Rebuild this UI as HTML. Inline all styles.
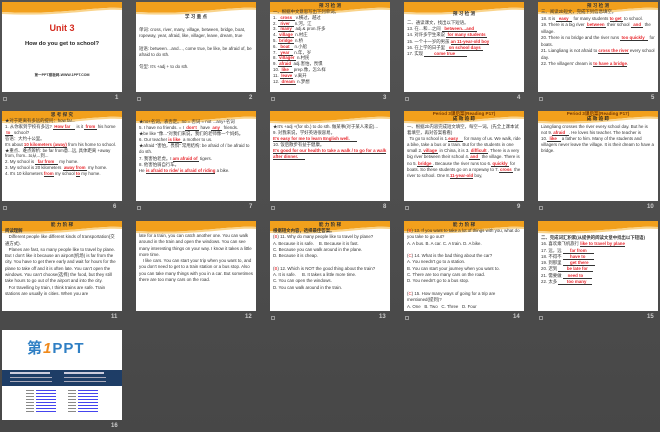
<!DOCTYPE html>
<html><head><meta charset="utf-8"><style>
*{margin:0;padding:0;box-sizing:border-box}
body{width:660px;height:432px;overflow:hidden;background:linear-gradient(#535353,#474747);font-family:"Liberation Sans","Noto Sans CJK SC",sans-serif;position:relative}
.s{position:absolute;width:120px;height:90px;background:#fff;overflow:hidden;font-size:4.4px;line-height:6.2px;color:#333}
.s svg.h{position:absolute;left:0;top:0}
.b{position:absolute;left:3px;right:3px;top:9px}
.t{text-align:center;font-weight:bold;font-size:4.6px;position:absolute;left:0;right:0;top:1px}
.r{color:#e8262c;border-bottom:.5px solid #333;font-weight:bold}
.n{position:absolute;color:#ccc;font-size:6px;font-weight:bold}
.i{position:absolute;width:4px;height:4px;border:.6px solid #999}
</style></head><body>
<div class="s" style="left:2px;top:2px">
<svg class="h" width="120" height="14"><path d="M0 0H120V6C95 4 60 13 0 10Z" fill="#f2a01c"/><path d="M0 10C60 13 95 4 120 6V8C95 6 60 15 0 12Z" fill="#f9d38a"/></svg>
<div style="position:absolute;top:23px;width:100%;text-align:center;color:#d42a1e;font-weight:bold;font-size:9px">Unit 3</div>
<div style="position:absolute;top:39px;width:100%;text-align:center;font-weight:bold;font-size:5.8px;color:#222">How do you get to school?</div>
<div style="position:absolute;top:70px;width:100%;text-align:center;font-weight:bold;font-size:3.6px">第一PPT模板网-WWW.1PPT.COM</div>
</div>
<div class="s" style="left:136px;top:2px">
<svg class="h" width="120" height="14"><path d="M0 0H120V6C95 4 60 13 0 10Z" fill="#f2a01c"/><path d="M0 10C60 13 95 4 120 6V8C95 6 60 15 0 12Z" fill="#f9d38a"/></svg>
<div class="t" style="top:12px">学 习 重 点</div>
<div class="b" style="top:25px">单词: cross, river, many, village, between, bridge, boat, ropeway, year, afraid, like, villager, leave, dream, true<br><br>短语: between…and…, come true, be like, be afraid of, be afraid to do sth.<br><br>句型: It's +adj + to do sth.</div>
</div>
<div class="s" style="left:270px;top:2px">
<svg class="h" width="120" height="14"><path d="M0 0H120V6C95 4 60 13 0 10Z" fill="#f2a01c"/><path d="M0 10C60 13 95 4 120 6V8C95 6 60 15 0 12Z" fill="#f9d38a"/></svg>
<div class="t">预 习 检 测</div>
<div class="b" style="top:7px;line-height:5.8px">一、根据中文意思写出下列单词。<br>1. <span class="r">&nbsp;&nbsp;cross&nbsp;&nbsp;</span> v.横过，越过<br>2. <span class="r">&nbsp;&nbsp;river&nbsp;&nbsp;&nbsp;</span> n.河，江<br>3. <span class="r">&nbsp;&nbsp;many&nbsp;&nbsp;</span> adj.&amp; pron.许多<br>4. <span class="r">&nbsp;village&nbsp;</span> n.村庄<br>5. <span class="r">&nbsp;bridge&nbsp;</span> n.桥<br>6. <span class="r">&nbsp;&nbsp;boat&nbsp;&nbsp;&nbsp;</span> n.小船<br>7. <span class="r">&nbsp;&nbsp;year&nbsp;&nbsp;&nbsp;</span> n.年，岁<br>8. <span class="r">&nbsp;villager&nbsp;</span> n.村民<br>9. <span class="r">&nbsp;afraid&nbsp;</span> adj.害怕，畏惧<br>10. <span class="r">&nbsp;like&nbsp;&nbsp;&nbsp;</span> prep.像，怎么样<br>11. <span class="r">&nbsp;leave&nbsp;</span> v.离开<br>12. <span class="r">&nbsp;dream&nbsp;</span> n.梦想</div>
</div>
<div class="s" style="left:404px;top:2px">
<svg class="h" width="120" height="14"><path d="M0 0H120V6C95 4 60 13 0 10Z" fill="#f2a01c"/><path d="M0 10C60 13 95 4 120 6V8C95 6 60 15 0 12Z" fill="#f9d38a"/></svg>
<div class="t" style="top:9px">预 习 检 测</div>
<div class="b" style="top:18px">二、通读课文，找出以下短语。<br>13. 在…和…之间 <span class="r">&nbsp;&nbsp;between…and&nbsp;&nbsp;</span><br>14. 对许多学生来说 <span class="r">&nbsp;for many students&nbsp;</span><br>15. 一个十一岁的男孩 <span class="r">an 11-year-old boy</span><br>16. 在上学的日子里 <span class="r">&nbsp;&nbsp;on school days&nbsp;&nbsp;</span><br>17. 实现 <span class="r">&nbsp;&nbsp;&nbsp;&nbsp;&nbsp;&nbsp;&nbsp;&nbsp;come true&nbsp;&nbsp;&nbsp;&nbsp;&nbsp;&nbsp;&nbsp;&nbsp;&nbsp;&nbsp;</span></div>
</div>
<div class="s" style="left:538px;top:2px">
<svg class="h" width="120" height="14"><path d="M0 0H120V6C95 4 60 13 0 10Z" fill="#f2a01c"/><path d="M0 10C60 13 95 4 120 6V8C95 6 60 15 0 12Z" fill="#f9d38a"/></svg>
<div class="t">预 习 检 测</div>
<div class="b" style="top:7px;line-height:6.5px">三、阅读2b短文，完成下列信息填空。<br>18. It is <span class="r">&nbsp;&nbsp;easy&nbsp;&nbsp;&nbsp;</span> for many students <span class="r">to get&nbsp;</span> to school.<br>19. There is a big river <span class="r">&nbsp;between&nbsp;</span> their school <span class="r">&nbsp;&nbsp;and&nbsp;&nbsp;</span> the village.<br>20. There is no bridge and the river runs <span class="r">&nbsp;too quickly&nbsp;&nbsp;&nbsp;</span> for boats.<br>21. Liangliang is not afraid to <span class="r">cross the river</span> every school day.<br>22. The villagers' dream is <span class="r">to have a bridge</span>.</div>
</div>

<div class="s" style="left:2px;top:111px">
<svg class="h" width="120" height="14"><path d="M0 0H120V6C95 4 60 13 0 10Z" fill="#f2a01c"/><path d="M0 10C60 13 95 4 120 6V8C95 6 60 15 0 12Z" fill="#f9d38a"/></svg>
<div class="t">思 考 探 究</div>
<div class="b" style="top:7px;line-height:5.9px">★对于距离有多远的提问：how far...<br>1. 从你家到学校有多远? <span class="r">&nbsp;How far&nbsp;&nbsp;&nbsp;&nbsp;</span> is it <span class="r">&nbsp;from&nbsp;</span> his home <span class="r">&nbsp;to&nbsp;&nbsp;</span> school?<br>答语：大约十公里。<br>It's about <span class="r">10 kilometers (away)</span> from his home to school.<br>★重点、难点辨析: be far from意...远, 具体距离 +away from, from...to从...到...<br>2. My school is <span class="r">&nbsp;&nbsp;far from&nbsp;&nbsp;&nbsp;</span> my home.<br>3. My school is 20 kilometers <span class="r">&nbsp;away from&nbsp;</span> my home.<br>4. It's 10 kilometers <span class="r">from</span> my school <span class="r">to</span> my home.</div>
</div>
<div class="s" style="left:136px;top:111px">
<svg class="h" width="120" height="14"><path d="M0 0H120V6C95 4 60 13 0 10Z" fill="#f2a01c"/><path d="M0 10C60 13 95 4 120 6V8C95 6 60 15 0 12Z" fill="#f9d38a"/></svg>
<div class="b" style="top:8px;line-height:6.1px">★no+名词，表否定。no = 否词 = not ...any+名词<br>5. I have no friends. = I <span class="r">&nbsp;don't&nbsp;&nbsp;</span> have <span class="r">&nbsp;any&nbsp;&nbsp;</span> friends.<br>★be like "像..."对我们来说，我们的老师像一个妈妈。<br>6. Our teacher <span class="r">is like&nbsp;</span> a mother to us.<br>★afraid "害怕，畏惧" 常用结构: be afraid of / be afraid to do sth.<br>7. 我害怕老虎。I <span class="r">am afraid of&nbsp;</span> tigers.<br>8. 他害怕骑自行车。<br>He <span class="r">is afraid to ride/ is afraid of riding</span> a bike.</div>
</div>
<div class="s" style="left:270px;top:111px">
<svg class="h" width="120" height="14"><path d="M0 0H120V6C95 4 60 13 0 10Z" fill="#f2a01c"/><path d="M0 10C60 13 95 4 120 6V8C95 6 60 15 0 12Z" fill="#f9d38a"/></svg>
<div class="b" style="top:13px;line-height:6.1px">★It's +adj +(for sb.) to do sth. 做某事(对于某人来说)...<br>9. 对我来说，学好英语很容易。<br><span class="r">It's easy for me to learn English well.&nbsp;&nbsp;&nbsp;&nbsp;&nbsp;&nbsp;</span><br>10. 饭后散步有益于健康。<br><span class="r">It's good for our health to take a walk / to go for a walk after dinner.&nbsp;&nbsp;&nbsp;&nbsp;&nbsp;&nbsp;</span></div>
</div>
<div class="s" style="left:404px;top:111px">
<svg class="h" width="120" height="14"><path d="M0 0H120V6C95 4 60 13 0 10Z" fill="#f2a01c"/><path d="M0 10C60 13 95 4 120 6V8C95 6 60 15 0 12Z" fill="#f9d38a"/></svg>
<div class="t" style="line-height:4.6px;color:#7a3b00">Period 3课后案(Reading P17)<br><span style="color:#222">成 效 追 踪</span></div>
<div class="b" style="top:13px;line-height:6.1px">一、根据2b内容完成短文填空，每空一词。(先全上课本试着填空，再对答案看看)<br>&nbsp;&nbsp;To go to school is 1.<span class="r">easy&nbsp;&nbsp;&nbsp;&nbsp;</span> for many of us. We walk, ride a bike, take a bus or a train. But for the students in one small 2.<span class="r">&nbsp;village&nbsp;</span> in China, it is 3.<span class="r">&nbsp;difficult&nbsp;</span>. There is a very big river between their school 4.<span class="r">&nbsp;and&nbsp;&nbsp;</span> the village. There is no 5.<span class="r">&nbsp;bridge&nbsp;</span>. Because the river runs too 6.<span class="r">&nbsp;quickly&nbsp;</span> for boats. So these students go on a ropeway to 7.<span class="r">&nbsp;cross&nbsp;</span> the river to school. One 8.<span class="r">11-year-old</span> boy,</div>
</div>
<div class="s" style="left:538px;top:111px">
<svg class="h" width="120" height="14"><path d="M0 0H120V6C95 4 60 13 0 10Z" fill="#f2a01c"/><path d="M0 10C60 13 95 4 120 6V8C95 6 60 15 0 12Z" fill="#f9d38a"/></svg>
<div class="t" style="line-height:4.6px;color:#7a3b00">Period 3课后案(Reading P17)<br><span style="color:#222">成 效 追 踪</span></div>
<div class="b" style="top:13px;line-height:6.1px">Liangliang crosses the river every school day. But he is not 9.<span class="r">&nbsp;afraid&nbsp;&nbsp;&nbsp;</span>. He loves his teacher. The teacher is 10.<span class="r">&nbsp;&nbsp;like&nbsp;&nbsp;&nbsp;</span> a father to him. Many of the students and villagers never leave the village. It is their dream to have a bridge.</div>
</div>

<div class="s" style="left:2px;top:221px">
<svg class="h" width="120" height="14"><path d="M0 0H120V6C95 4 60 13 0 10Z" fill="#f2a01c"/><path d="M0 10C60 13 95 4 120 6V8C95 6 60 15 0 12Z" fill="#f9d38a"/></svg>
<div class="t">能 力 阶 梯</div>
<div class="b" style="top:7px;line-height:6.3px"><b>阅读理解</b><br>&nbsp;&nbsp;&nbsp;Different people like different kinds of transportation(交通方式).<br>&nbsp;&nbsp;&nbsp;Planes are fast, so many people like to travel by plane. But I don't like it because an airport(机场) is far from the city. You have to get there early and wait for hours for the plane to take off and it is often late. You can't open the windows. You can't choose(选择) the food, but they still take hours to go out of the airport and into the city.<br>&nbsp;&nbsp;&nbsp;For travelling by train, I think trains are safe. Train stations are usually in cities. When you are</div>
</div>
<div class="s" style="left:136px;top:221px">
<svg class="h" width="120" height="14"><path d="M0 0H120V6C95 4 60 13 0 10Z" fill="#f2a01c"/><path d="M0 10C60 13 95 4 120 6V8C95 6 60 15 0 12Z" fill="#f9d38a"/></svg>
<div class="b" style="top:12px;line-height:6.3px">late for a train, you can catch another one. You can walk around in the train and open the windows. You can see many interesting things on your way. I know it takes a little more time.<br>&nbsp;&nbsp;&nbsp;I like cars. You can start your trip when you want to, and you don't need to get to a train station or a bus stop. Also you can take many things with you in a car. But sometimes there are too many cars on the road.</div>
</div>
<div class="s" style="left:270px;top:221px">
<svg class="h" width="120" height="14"><path d="M0 0H120V6C95 4 60 13 0 10Z" fill="#f2a01c"/><path d="M0 10C60 13 95 4 120 6V8C95 6 60 15 0 12Z" fill="#f9d38a"/></svg>
<div class="t">能 力 阶 梯</div>
<div class="b" style="top:7px;line-height:6.3px"><b>根据短文内容，选择最佳答案。</b><br>(<span style="color:#e8262c">B</span>) 11. Why do many people like to travel by plane?<br>A. Because it is safe.&nbsp;&nbsp;&nbsp;&nbsp;B. Because it is fast.<br>C. Because you can walk around in the plane.<br>D. Because it is cheap.<br><br>(<span style="color:#e8262c">B</span>) 12. Which is NOT the good thing about the train?<br>A. It is safe.&nbsp;&nbsp;&nbsp;&nbsp;&nbsp;B. It takes a little more time.<br>C. You can open the windows.<br>D. You can walk around in the train.</div>
</div>
<div class="s" style="left:404px;top:221px">
<svg class="h" width="120" height="14"><path d="M0 0H120V6C95 4 60 13 0 10Z" fill="#f2a01c"/><path d="M0 10C60 13 95 4 120 6V8C95 6 60 15 0 12Z" fill="#f9d38a"/></svg>
<div class="t">能 力 阶 梯</div>
<div class="b" style="top:7px;line-height:6.3px">(<span style="color:#e8262c">B</span>) 13. If you want to take a lot of things with you, what do you take to go out?<br>A. A bus. B. A car. C. A train. D. A bike.<br><br>(<span style="color:#e8262c">C</span>) 14. What is the bad thing about the car?<br>A. You needn't go to a station.<br>B. You can start your journey when you want to.<br>C. There are too many cars on the road.<br>D. You needn't go to a bus stop.<br><br>(<span style="color:#e8262c">C</span>) 15. How many ways of going for a trip are mentioned(提到)?<br>A. One&nbsp;&nbsp;&nbsp;B. Two&nbsp;&nbsp;&nbsp;C. Three&nbsp;&nbsp;&nbsp;D. Four</div>
</div>
<div class="s" style="left:538px;top:221px">
<svg class="h" width="120" height="14"><path d="M0 0H120V6C95 4 60 13 0 10Z" fill="#f2a01c"/><path d="M0 10C60 13 95 4 120 6V8C95 6 60 15 0 12Z" fill="#f9d38a"/></svg>
<div class="b" style="top:14px;line-height:6.3px"><b>二、完成词汇积累(从提供的阅读文章中找出以下短语)</b><br>16. 喜欢乘飞机旅行 <span class="r">like to travel by plane</span><br>17. 远，远 <span class="r">&nbsp;&nbsp;&nbsp;&nbsp;&nbsp;&nbsp;far from&nbsp;&nbsp;&nbsp;&nbsp;&nbsp;&nbsp;</span><br>18. 不得不 <span class="r">&nbsp;&nbsp;&nbsp;&nbsp;&nbsp;&nbsp;have to&nbsp;&nbsp;&nbsp;&nbsp;&nbsp;&nbsp;&nbsp;</span><br>19. 到那里 <span class="r">&nbsp;&nbsp;&nbsp;&nbsp;&nbsp;&nbsp;get there&nbsp;&nbsp;&nbsp;&nbsp;&nbsp;</span><br>20. 迟到 <span class="r">&nbsp;&nbsp;&nbsp;&nbsp;&nbsp;&nbsp;&nbsp;be late for&nbsp;&nbsp;&nbsp;&nbsp;</span><br>21. 需要做 <span class="r">&nbsp;&nbsp;&nbsp;&nbsp;need to&nbsp;&nbsp;&nbsp;&nbsp;&nbsp;&nbsp;&nbsp;</span><br>22. 太多 <span class="r">&nbsp;&nbsp;&nbsp;&nbsp;&nbsp;&nbsp;&nbsp;too many&nbsp;&nbsp;&nbsp;&nbsp;&nbsp;</span></div>
</div>

<div class="s" style="left:2px;top:330px">
<div style="position:absolute;left:25px;top:11px;font-size:15px;line-height:16px;font-weight:bold;color:#2f7fc4;letter-spacing:1px">第<span style="color:#f08a1c;font-style:italic">1</span>PPT</div>
<div style="position:absolute;left:0;right:0;top:40px;height:16px;background:#1e3d66"></div>
<div style="position:absolute;left:8px;top:42px;width:40px;height:1.5px;background:#ccd"></div>
<div style="position:absolute;left:62px;top:42px;width:40px;height:1.5px;background:#ccd"></div>
<div style="position:absolute;left:8px;top:47px;width:42px;height:1px;background:#aab"></div>
<div style="position:absolute;left:62px;top:47px;width:42px;height:1px;background:#aab"></div>
<div style="position:absolute;left:8px;top:51px;width:42px;height:1px;background:#aab"></div>
<div style="position:absolute;left:62px;top:51px;width:42px;height:1px;background:#aab"></div>
<div style="position:absolute;left:34px;top:60px;width:20px;height:24px;background:repeating-linear-gradient(#4444ee 0 1px,transparent 1px 3px)"></div>
<div style="position:absolute;left:76px;top:60px;width:20px;height:24px;background:repeating-linear-gradient(#4444ee 0 1px,transparent 1px 3px)"></div>
<div style="position:absolute;left:24px;top:60px;width:8px;height:24px;background:repeating-linear-gradient(#888 0 1px,transparent 1px 3px)"></div>
<div style="position:absolute;left:66px;top:60px;width:8px;height:24px;background:repeating-linear-gradient(#888 0 1px,transparent 1px 3px)"></div>
</div>

<div class="n" style="left:115px;top:95px">1</div><div class="n" style="left:249px;top:95px">2</div><div class="n" style="left:383px;top:95px">3</div><div class="n" style="left:517px;top:95px">4</div><div class="n" style="left:651px;top:95px">5</div>
<div class="n" style="left:113px;top:204px">6</div><div class="n" style="left:249px;top:204px">7</div><div class="n" style="left:383px;top:204px">8</div><div class="n" style="left:517px;top:204px">9</div><div class="n" style="left:647px;top:204px">10</div>
<div class="n" style="left:111px;top:314px">11</div><div class="n" style="left:245px;top:314px">12</div><div class="n" style="left:379px;top:314px">13</div><div class="n" style="left:513px;top:314px">14</div><div class="n" style="left:647px;top:314px">15</div>
<div class="n" style="left:111px;top:423px">16</div>
<div class="i" style="left:3px;top:97px"></div><div class="i" style="left:137px;top:97px"></div><div class="i" style="left:271px;top:97px"></div><div class="i" style="left:405px;top:97px"></div><div class="i" style="left:539px;top:97px"></div>
<div class="i" style="left:3px;top:206px"></div><div class="i" style="left:137px;top:206px"></div><div class="i" style="left:271px;top:206px"></div><div class="i" style="left:405px;top:206px"></div><div class="i" style="left:539px;top:206px"></div>
<div class="i" style="left:271px;top:316px"></div><div class="i" style="left:405px;top:316px"></div><div class="i" style="left:539px;top:316px"></div>
</body></html>
